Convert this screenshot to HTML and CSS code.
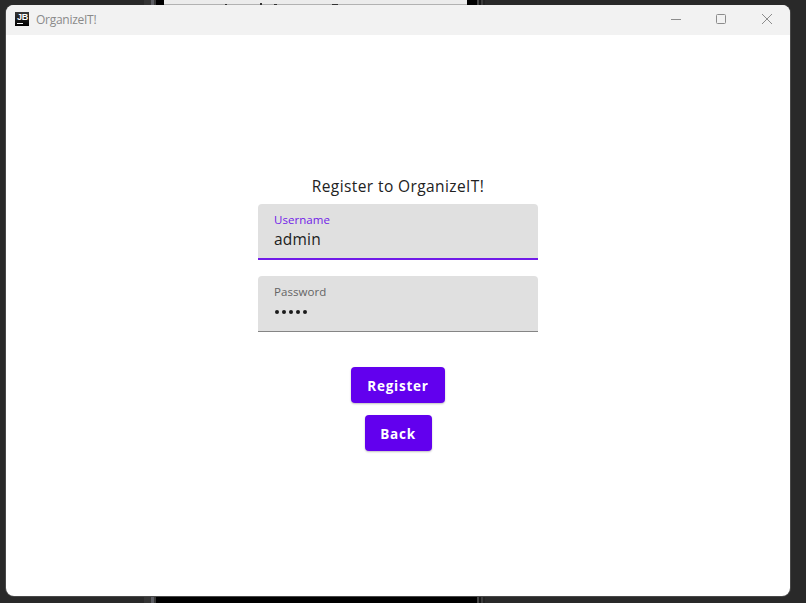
FILE: index.html
```
<!DOCTYPE html>
<html lang="en">
<head>
<meta charset="utf-8">
<title>OrganizeIT!</title>
<link rel="stylesheet" href="styles.css">
</head>
<body>
<svg class="backdrop" width="806" height="603" aria-hidden="true">
  <rect width="806" height="603" fill="#292929"/>
  <rect x="144" width="7" height="603" fill="#343434"/>
  <rect x="151" width="3" height="603" fill="#5c5d63"/>
  <rect x="154" width="2" height="603" fill="#383838"/>
  <rect x="156" width="321" height="603" fill="#000"/>
  <rect x="164" width="303" height="5" fill="#ececec"/>
  <rect x="164" y="4" width="303" height="1" fill="#b2b2b2"/>
  <path d="M225 4h2v1h-2zM260 3h2v2h-2zM274 4h3v1h-3zM332 4h6v1h-6z" fill="#333"/>
  <rect x="477" width="2" height="603" fill="#454545"/>
  <rect x="479" width="2" height="603" fill="#171717"/>
  <rect x="481" width="2" height="603" fill="#3c3c3c"/>
  <rect x="483" width="2" height="603" fill="#222"/>
</svg>
<div class="window">
  <header class="titlebar">
    <span class="app-icon">JB</span>
    <span class="app-name">OrganizeIT!</span>
    <svg class="controls" width="104" height="12" viewBox="0 0 104 12" fill="none" stroke="#8c8c8c">
      <path d="M1 6.5h10"/>
      <rect x="46.5" y="1.500" width="9" height="9" rx="1"/>
      <path d="M92 1l10 10M102 1L92 11"/>
    </svg>
  </header>
  <main class="form">
    <h1 class="heading">Register to OrganizeIT!</h1>
    <div class="field focused">
      <span class="label">Username</span>
      <span class="value">admin</span>
    </div>
    <div class="field">
      <span class="label">Password</span>
      <span class="dots"><i></i><i></i><i></i><i></i><i></i></span>
    </div>
    <button class="button register">Register</button>
    <button class="button back">Back</button>
  </main>
</div>
</body>
</html>
```
FILE: styles.css
```
* { box-sizing: border-box; }
body {
  margin: 0;
  width: 806px;
  height: 603px;
  padding: 5px 16px 7px 6px;
  overflow: hidden;
  background: #292929;
  font-family: "Open Sans", "Noto Sans", sans-serif;
}
.backdrop { position: absolute; inset: 0; z-index: -1; }
.window {
  height: 591px;
  background: #fff;
  border-radius: 8px;
  overflow: hidden;
  box-shadow: 0 0 0 1px #484848;
  clip-path: inset(0 -1px -1px -1px);
}
.titlebar {
  display: flex;
  align-items: center;
  height: 30px;
  padding: 0 16px 0 9px;
  background: #f2f2f2;
}
.app-icon {
  width: 14px;
  height: 14px;
  margin-top: -2px;
  padding-left: 2px;
  background: linear-gradient(#fff, #fff) 2px 11px / 6px 1px no-repeat, linear-gradient(#383838, #000);
  color: #fff;
  font: bold 9px/10px "Liberation Sans", sans-serif;
  letter-spacing: -0.2px;
}
.app-name {
  margin-left: 7px;
  color: #8a8a8a;
  font-size: 12px;
  line-height: 16px;
  letter-spacing: -0.27px;
}
.controls { margin: -2px 0 0 auto; }
.form {
  display: flex;
  flex-direction: column;
  align-items: center;
  padding-top: 139px;
}
.heading {
  margin: 0 0 6px;
  color: #222;
  font-size: 15.5px;
  font-weight: 400;
  line-height: 24px;
  letter-spacing: 0.4px;
  white-space: nowrap;
}
.field {
  display: flex;
  flex-direction: column;
  width: 280px;
  height: 56px;
  margin-bottom: 16px;
  padding: 8px 16px 0;
  background: #e0e0e0;
  border-bottom: 1px solid #858585;
  border-radius: 4px 4px 0 0;
}
.field.focused { border-bottom: 2px solid #711be8; }
.label {
  color: #646464;
  font-size: 11.5px;
  line-height: 16px;
  letter-spacing: 0.05px;
}
.focused .label { color: #711be8; }
.value {
  margin-top: -1px;
  color: #202020;
  font-size: 15.5px;
  line-height: 24px;
  letter-spacing: 0.2px;
}
.dots { display: flex; gap: 3px; padding: 10px 0 0 1px; }
.dots i { width: 4px; height: 4px; border-radius: 50%; background: #1b1b1b; }
.button {
  height: 36px;
  padding: 2px 0 0;
  border: 0;
  border-radius: 4px;
  background: #6200ee;
  box-shadow: 0 1px 2px rgba(0, 0, 0, .25);
  color: #fff;
  font: 700 13.5px/20px "Open Sans", "Noto Sans", sans-serif;
  letter-spacing: 0.75px;
}
.register { width: 94px; margin: 19px 0 12px; }
.back { width: 67px; }
```
